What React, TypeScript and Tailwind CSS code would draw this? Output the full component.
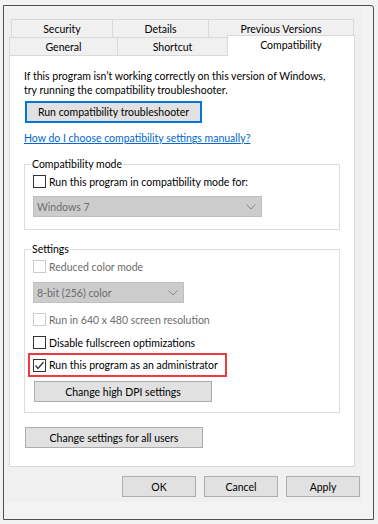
import React from "react";

function Check({ checked = false, disabled = false }: { checked?: boolean; disabled?: boolean }) {
  return (
    <span
      className={`flex w-[13px] h-[13px] shrink-0 items-center justify-center border bg-white ${
        disabled ? "border-[#cccccc]" : "border-[#333333]"
      }`}
    >
      {checked && (
        <svg width="11" height="11" viewBox="0 0 11 11">
          <polyline points="1.5,5.5 4,8.5 9.5,2" fill="none" stroke="#333333" strokeWidth="1.2" />
        </svg>
      )}
    </span>
  );
}

function CheckRow({
  label,
  checked = false,
  disabled = false,
  className = "",
}: {
  label: string;
  checked?: boolean;
  disabled?: boolean;
  className?: string;
}) {
  return (
    <div className={`flex h-[15px] items-center gap-[3px] whitespace-nowrap ${className}`}>
      <Check checked={checked} disabled={disabled} />
      <span className={`leading-[14px] ${disabled ? "text-[#6d6d6d]" : "text-black"}`}>{label}</span>
    </div>
  );
}

function Dropdown({ label, className = "" }: { label: string; className?: string }) {
  return (
    <div
      className={`flex h-[21px] items-center justify-between border border-[#bfbfbf] bg-[#cccccc] pl-[3px] pr-[5px] text-[#6d6d6d] ${className}`}
    >
      <span className="leading-[14px]">{label}</span>
      <svg width="10" height="6" viewBox="0 0 10 6">
        <polyline points="0.5,0.5 5,5 9.5,0.5" fill="none" stroke="#8a8a8a" strokeWidth="1" />
      </svg>
    </div>
  );
}

function Btn({ label, className = "" }: { label: string; className?: string }) {
  return (
    <div
      className={`flex h-[21px] items-center justify-center whitespace-nowrap border border-[#adadad] bg-[#e1e1e1] leading-[14px] text-black ${className}`}
    >
      {label}
    </div>
  );
}

export default function App() {
  return (
    <div className="w-[378px] h-[524px] overflow-hidden bg-[#f2f2f2] pl-[3px] pt-[5px] font-['Lato','Liberation_Sans',sans-serif] text-[10.5px] text-black">
      <div className="w-[371px] h-[515px] rounded-tr-[3px] border border-[#4f4f4f] bg-[#f3f3f3] p-[2px]">
        <div className="w-[356px] h-[494px] bg-[#f0f0f0] pt-[11px]">
          {/* tab row 1 */}
          <div className="ml-[5px] flex h-[18px]">
            <div className="flex w-[101px] items-center justify-center border-l border-t border-[#d9d9d9] leading-[14px]">
              Security
            </div>
            <div className="flex w-[96px] items-center justify-center border-l border-t border-[#d9d9d9] leading-[14px]">
              Details
            </div>
            <div className="flex w-[146px] items-center justify-center border-l border-r border-t border-[#d9d9d9] leading-[14px]">
              Previous Versions
            </div>
          </div>
          {/* tab row 2 */}
          <div className="ml-[3px] flex h-[18px] items-start">
            <div className="flex h-[18px] w-[108px] items-center justify-center border-l border-t border-[#d9d9d9] leading-[14px]">
              General
            </div>
            <div className="flex h-[18px] w-[110px] items-center justify-center border-l border-t border-[#d9d9d9] leading-[14px]">
              Shortcut
            </div>
            <div className="relative z-10 -mt-[2px] flex h-[21px] w-[128px] items-start justify-center border-l border-r border-t border-[#d9d9d9] bg-white pt-[2px] leading-[14px]">
              Compatibility
            </div>
          </div>
          {/* panel */}
          <div className="ml-[3px] h-[412px] w-[346px] border border-[#d9d9d9] bg-white pl-[14px] pt-[13px]">
            <p className="whitespace-nowrap leading-[14px]">
              If this program isn’t working correctly on this version of Windows,
              <br />
              try running the compatibility troubleshooter.
            </p>
            <div className="ml-[1px] mt-[4px] flex h-[22px] w-[177px] items-center justify-center whitespace-nowrap border-2 border-[#0078d7] bg-[#e1e1e1] leading-[14px]">
              Run compatibility troubleshooter
            </div>
            <div className="mt-[8px] whitespace-nowrap leading-[14px] text-[#0066cc] underline">
              How do I choose compatibility settings manually?
            </div>

            <fieldset className="mt-[12px] w-[316px] border border-[#dcdcdc] pb-[12px] pl-[8px]">
              <legend className="-ml-[2px] px-[1px] leading-[14px]">Compatibility mode</legend>
              <CheckRow className="mt-[3px]" label="Run this program in compatibility mode for:" />
              <Dropdown className="mt-[7px] w-[229px]" label="Windows 7" />
            </fieldset>

            <fieldset className="mt-[12px] w-[316px] border border-[#dcdcdc] pb-[10px] pl-[8px]">
              <legend className="-ml-[2px] px-[1px] leading-[14px]">Settings</legend>
              <CheckRow className="mt-[3px]" label="Reduced color mode" disabled />
              <Dropdown className="mt-[8px] w-[151px]" label="8-bit (256) color" />
              <CheckRow className="mt-[9px]" label="Run in 640 x 480 screen resolution" disabled />
              <CheckRow className="mt-[8px]" label="Disable fullscreen optimizations" />
              <div className="-ml-[5px] mt-[3px] flex h-[24px] w-[199px] items-center border-2 border-[#ee3a3f] pl-[3px]">
                <CheckRow label="Run this program as an administrator" checked />
              </div>
              <Btn className="ml-[1px] mt-[4px] w-[178px]" label="Change high DPI settings" />
            </fieldset>

            <Btn className="ml-[1px] mt-[14px] w-[178px]" label="Change settings for all users" />
          </div>
          {/* bottom buttons */}
          <div className="mt-[9px] flex gap-[8px] pl-[116px]">
            <Btn className="w-[74px]" label="OK" />
            <Btn className="w-[74px]" label="Cancel" />
            <Btn className="w-[74px]" label="Apply" />
          </div>
        </div>
      </div>
    </div>
  );
}
